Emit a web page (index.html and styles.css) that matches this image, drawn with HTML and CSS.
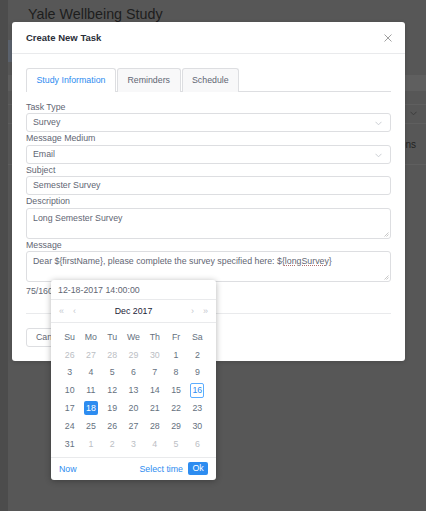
FILE: index.html
```html
<!DOCTYPE html>
<html>
<head>
<meta charset="utf-8">
<title>Create New Task</title>
<link rel="stylesheet" href="styles.css">
</head>
<body>
<div class="backdrop">
  <div class="sidebar"></div>
  <div class="app">
    <div class="app-title">Yale Wellbeing Study</div>
    <div class="app-band"></div>
    <div class="app-table">
      <div class="t-head"></div>
      <div class="t-row t-row-a"></div>
      <div class="t-row t-row-b">
        <svg class="t-chev" width="7" height="5" viewBox="0 0 7 5"><polyline points="0.5,0.8 3.5,3.8 6.5,0.8" fill="none" stroke="#3a3a3a" stroke-width="0.9"/></svg>
      </div>
      <div class="t-row t-row-c"><span class="t-text">Actions</span></div>
    </div>
  </div>
</div>

<div class="modal">
  <div class="modal-header">
    <span class="modal-title">Create New Task</span>
    <svg class="modal-close" width="8" height="8" viewBox="0 0 8 8"><path d="M0.5 0.5 L7.5 7.5 M7.5 0.5 L0.5 7.5" stroke="#a0a0a0" stroke-width="1" fill="none"/></svg>
  </div>
  <div class="modal-body">
    <div class="tabs">
      <div class="tab tab-active">Study Information</div>
      <div class="tab">Reminders</div>
      <div class="tab">Schedule</div>
    </div>

    <div class="label">Task Type</div>
    <div class="field select">Survey
      <svg class="chev" width="7" height="5" viewBox="0 0 7 5"><polyline points="0.5,0.8 3.5,3.8 6.5,0.8" fill="none" stroke="#c5c8ce" stroke-width="0.9"/></svg>
    </div>

    <div class="label">Message Medium</div>
    <div class="field select">Email
      <svg class="chev" width="7" height="5" viewBox="0 0 7 5"><polyline points="0.5,0.8 3.5,3.8 6.5,0.8" fill="none" stroke="#c5c8ce" stroke-width="0.9"/></svg>
    </div>

    <div class="label">Subject</div>
    <div class="field">Semester Survey</div>

    <div class="label">Description</div>
    <div class="field area">Long Semester Survey
      <svg class="grip" width="5" height="5" viewBox="0 0 5 5"><path d="M4.5 0.5 L0.5 4.5 M4.5 2.5 L2.5 4.5" stroke="#b0b0b0" stroke-width="0.7" fill="none"/></svg>
    </div>

    <div class="label">Message</div>
    <div class="field area">Dear ${firstName}, please complete the survey specified here: ${<span class="squiggle">longSurvey</span>}
      <svg class="grip" width="5" height="5" viewBox="0 0 5 5"><path d="M4.5 0.5 L0.5 4.5 M4.5 2.5 L2.5 4.5" stroke="#b0b0b0" stroke-width="0.7" fill="none"/></svg>
    </div>

    <div class="counter">75/160</div>

    <div class="modal-footer">
      <div class="btn">Cancel</div>
    </div>
  </div>
</div>

<div class="picker">
  <div class="picker-value">12-18-2017 14:00:00</div>
  <div class="picker-nav">
    <span class="nav-group"><span class="arrow">«</span><span class="arrow">‹</span></span>
    <span class="nav-title">Dec 2017</span>
    <span class="nav-group"><span class="arrow">›</span><span class="arrow">»</span></span>
  </div>
  <div class="picker-grid">
    <span class="wk">Su</span><span class="wk">Mo</span><span class="wk">Tu</span><span class="wk">We</span><span class="wk">Th</span><span class="wk">Fr</span><span class="wk">Sa</span>
    <span class="d muted">26</span><span class="d muted">27</span><span class="d muted">28</span><span class="d muted">29</span><span class="d muted">30</span><span class="d">1</span><span class="d">2</span>
    <span class="d">3</span><span class="d">4</span><span class="d">5</span><span class="d">6</span><span class="d">7</span><span class="d">8</span><span class="d">9</span>
    <span class="d">10</span><span class="d">11</span><span class="d">12</span><span class="d">13</span><span class="d">14</span><span class="d">15</span><span class="d"><span class="today">16</span></span>
    <span class="d">17</span><span class="d"><span class="sel">18</span></span><span class="d">19</span><span class="d">20</span><span class="d">21</span><span class="d">22</span><span class="d">23</span>
    <span class="d">24</span><span class="d">25</span><span class="d">26</span><span class="d">27</span><span class="d">28</span><span class="d">29</span><span class="d">30</span>
    <span class="d">31</span><span class="d muted">1</span><span class="d muted">2</span><span class="d muted">3</span><span class="d muted">4</span><span class="d muted">5</span><span class="d muted">6</span>
  </div>
  <div class="picker-foot">
    <span class="link">Now</span>
    <span class="foot-right"><span class="link">Select time</span><span class="ok">Ok</span></span>
  </div>
</div>
</body>
</html>
```

FILE: styles.css
```css
* { box-sizing: border-box; }

html, body {
  margin: 0;
  padding: 0;
}

body {
  width: 426px;
  height: 511px;
  overflow: hidden;
  position: relative;
  background: #575757;
  font-family: "Liberation Sans", Arial, Helvetica, sans-serif;
  font-size: 8.8px;
  color: #5f6673;
}

/* ---------- background page (under overlay) ---------- */
.backdrop {
  display: flex;
  width: 426px;
  height: 511px;
}

.sidebar {
  width: 8px;
  flex: none;
  background: #4c4c4c;
}

.app {
  flex: 1;
  display: flex;
  flex-direction: column;
}

.app-title {
  height: 30px;
  padding-left: 20px;
  line-height: 28px;
  font-size: 14.3px;
  color: #1d1d1d;
}

.app-band {
  margin-top: 10px;
  height: 22px;
  width: 120px;
  background: #5c636e;
}

.app-table {
  margin-top: 13px;
  display: flex;
  flex-direction: column;
}

.t-head {
  height: 16px;
  background: #5f5f5f;
}

.t-row {
  border-bottom: 1px solid #5f5f5f;
  display: flex;
  align-items: center;
  justify-content: flex-end;
  padding-right: 10px;
}

.t-row-a { height: 14px; }
.t-row-b { height: 19px; padding-right: 9px; align-items: flex-start; padding-top: 6px; }
.t-row-c { height: 41px; }

.t-text {
  font-size: 10px;
  color: #222;
}

/* ---------- modal ---------- */
.modal {
  position: absolute;
  left: 12px;
  top: 22px;
  width: 393px;
  background: #fff;
  border-radius: 3px;
  box-shadow: 0 1px 4px rgba(0,0,0,0.15);
}

.modal-header {
  height: 32px;
  padding: 0 14px;
  border-bottom: 1px solid #e9eaec;
  display: flex;
  align-items: center;
  justify-content: space-between;
}

.modal-title {
  font-size: 9.5px;
  font-weight: bold;
  color: #2a2e38;
}

.modal-close {
  margin-right: -1px;
}

.modal-body {
  padding: 14px;
  display: flex;
  flex-direction: column;
}

.tabs {
  display: flex;
  height: 24px;
  border-bottom: 1px solid #dddee1;
  margin-bottom: 8.5px;
}

.tab {
  height: 24px;
  padding: 0 9.5px;
  margin-right: 1px;
  line-height: 22px;
  background: #f8f8f9;
  border: 1px solid #dddee1;
  border-bottom: none;
  border-radius: 3px 3px 0 0;
  color: #5f6673;
}

.tab-active {
  background: #fff;
  color: #2d8cf0;
  height: 24px;
  position: relative;
  margin-bottom: -1px;
}

.label {
  height: 12.5px;
  line-height: 12.5px;
  color: #5f6673;
}

.field {
  position: relative;
  height: 19px;
  line-height: 17px;
  padding: 0 7px 0 6px;
  border: 1px solid #dddee1;
  border-radius: 3px;
  color: #5f6673;
  white-space: nowrap;
}

.select .chev {
  position: absolute;
  right: 8px;
  top: 7px;
}

.area {
  height: 31px;
  line-height: 12px;
  padding-top: 3px;
}

.grip {
  position: absolute;
  right: 1px;
  bottom: 1px;
}

.squiggle {
  text-decoration: underline dotted #b07070;
  text-underline-offset: 1px;
}

.counter {
  margin-top: 3px;
  height: 13px;
  line-height: 13px;
  color: #5f6673;
}

.modal-footer {
  margin-top: 15px;
  border-top: 1px solid #e9eaec;
  padding-top: 14px;
  display: flex;
}

.btn {
  height: 19px;
  line-height: 17px;
  padding: 0 9px;
  border: 1px solid #dddee1;
  border-radius: 3px;
  color: #5f6673;
}

/* ---------- date picker ---------- */
.picker {
  position: absolute;
  left: 51px;
  top: 280px;
  width: 165px;
  background: #fff;
  border-radius: 3px;
  box-shadow: 0 1px 6px rgba(0,0,0,0.3);
  display: flex;
  flex-direction: column;
}

.picker-value {
  height: 20px;
  line-height: 20px;
  padding-left: 7px;
  border-bottom: 1px solid #e9eaec;
  color: #5f6673;
}

.picker-nav {
  height: 23px;
  border-bottom: 1px solid #e9eaec;
  display: flex;
  align-items: center;
  justify-content: space-between;
  padding: 0 8px 0 8px;
}

.nav-group {
  display: flex;
  gap: 9px;
}

.arrow {
  color: #c5c8ce;
  font-size: 9px;
  line-height: 10px;
}

.nav-title {
  color: #1c2438;
  font-size: 8.8px;
}

.picker-grid {
  display: grid;
  grid-template-columns: repeat(7, 1fr);
  grid-auto-rows: 17.8px;
  padding: 5px 8px 4px;
  border-bottom: 1px solid #e9eaec;
}

.wk, .d {
  display: flex;
  align-items: center;
  justify-content: center;
  color: #657180;
}

.muted { color: #bbbec4; }

.today, .sel {
  display: flex;
  align-items: center;
  justify-content: center;
  width: 14px;
  height: 14px;
  border-radius: 2px;
}

.today {
  height: 15px;
  border: 1px solid #5cadff;
  color: #2d8cf0;
}

.sel {
  background: #2d8cf0;
  color: #fff;
}

.picker-foot {
  height: 22px;
  padding: 0 8px;
  display: flex;
  align-items: center;
  justify-content: space-between;
}

.link {
  color: #2d8cf0;
}

.foot-right {
  display: flex;
  align-items: center;
  gap: 5px;
}

.ok {
  width: 20px;
  height: 13px;
  line-height: 13px;
  text-align: center;
  background: #2d8cf0;
  color: #fff;
  border-radius: 2px;
}
```
